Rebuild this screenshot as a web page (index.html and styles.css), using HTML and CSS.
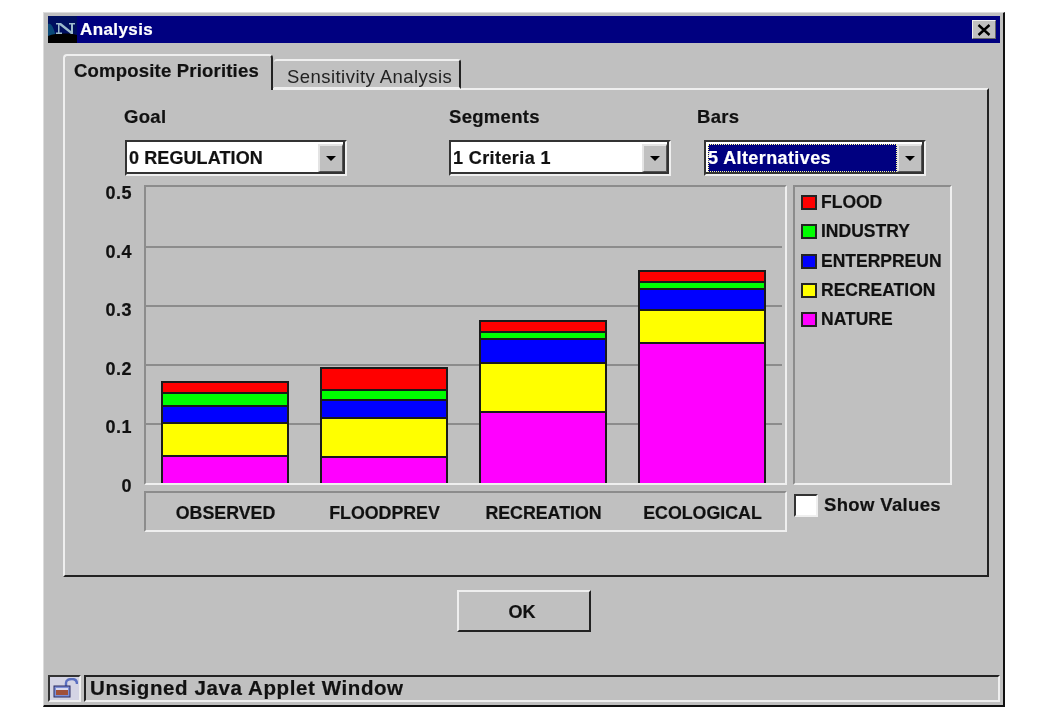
FILE: index.html
```html
<!DOCTYPE html>
<html lang="en">
<head>
<meta charset="utf-8">
<title>Analysis</title>
<link rel="stylesheet" href="styles.css">
</head>
<body>
<div class="window">
  <div class="titlebar">
    <svg class="logo" width="29" height="27" viewBox="0 0 29 27"><rect width="29" height="27" fill="#001060"/><path d="M0 8C4 6 6 14 8 20H0Z" fill="#0a4a78"/><path d="M0 20C8 17 20 17 29 19V27H0Z" fill="#000"/><path d="M8 7H13L23 15V8.500H21V7H27V8.500H25V18H23L11.500 9V16.500H14V18H8V16.500H10V8.500H8Z" fill="#9dbccc"/></svg>
    <span class="title">Analysis</span>
    <button class="close"><svg width="14" height="12" viewBox="0 0 14 12"><path d="M1.500 1L12.500 11M12.500 1L1.500 11" stroke="#000" stroke-width="2.400"/></svg></button>
  </div>
  <div class="content">
    <div class="tabs">
      <div class="tab tab-active">Composite Priorities</div>
      <div class="tab tab-other">Sensitivity Analysis</div>
    </div>
    <div class="panel">
      <div class="selectors">
        <div class="selector sel-goal">
          <div class="sel-label">Goal</div>
          <div class="combo combo-goal">
            <div class="combo-value">0 REGULATION</div>
            <div class="combo-btn"><span class="tri"></span></div>
          </div>
        </div>
        <div class="selector sel-seg">
          <div class="sel-label">Segments</div>
          <div class="combo combo-seg">
            <div class="combo-value">1 Criteria 1</div>
            <div class="combo-btn"><span class="tri"></span></div>
          </div>
        </div>
        <div class="selector sel-bars">
          <div class="sel-label">Bars</div>
          <div class="combo combo-bars">
            <div class="combo-value focused">5 Alternatives</div>
            <div class="combo-btn"><span class="tri"></span></div>
          </div>
        </div>
      </div>
      <div class="chart-row">
        <div class="yaxis">
          <span>0.5</span><span>0.4</span><span>0.3</span><span>0.2</span><span>0.1</span><span>0</span>
        </div>
        <div class="chart-main">
          <div class="plot">
            <div class="grid"><i></i><i></i><i></i><i></i></div>
            <div class="bars">
              <div class="bar">
                <div class="seg red" style="height:13px"></div>
                <div class="seg green" style="height:13px"></div>
                <div class="seg blue" style="height:17px"></div>
                <div class="seg yellow" style="height:33px"></div>
                <div class="seg magenta" style="height:26px"></div>
              </div>
              <div class="bar">
                <div class="seg red" style="height:24px"></div>
                <div class="seg green" style="height:10px"></div>
                <div class="seg blue" style="height:18px"></div>
                <div class="seg yellow" style="height:39px"></div>
                <div class="seg magenta" style="height:25px"></div>
              </div>
              <div class="bar">
                <div class="seg red" style="height:13px"></div>
                <div class="seg green" style="height:7px"></div>
                <div class="seg blue" style="height:24px"></div>
                <div class="seg yellow" style="height:49px"></div>
                <div class="seg magenta" style="height:70px"></div>
              </div>
              <div class="bar">
                <div class="seg red" style="height:13px"></div>
                <div class="seg green" style="height:7px"></div>
                <div class="seg blue" style="height:21px"></div>
                <div class="seg yellow" style="height:33px"></div>
                <div class="seg magenta" style="height:139px"></div>
              </div>
            </div>
          </div>
          <div class="categories">
            <span>OBSERVED</span><span>FLOODPREV</span><span>RECREATION</span><span>ECOLOGICAL</span>
          </div>
        </div>
        <div class="side">
          <div class="legend">
            <div class="legend-item"><span class="swatch red"></span>FLOOD</div>
            <div class="legend-item"><span class="swatch green"></span>INDUSTRY</div>
            <div class="legend-item"><span class="swatch blue"></span>ENTERPREUN</div>
            <div class="legend-item"><span class="swatch yellow"></span>RECREATION</div>
            <div class="legend-item"><span class="swatch magenta"></span>NATURE</div>
          </div>
          <div class="show-values"><span class="checkbox"></span><span class="show-label">Show Values</span></div>
        </div>
      </div>
    </div>
    <div class="actions"><button class="ok">OK</button></div>
  </div>
  <div class="statusbar">
    <div class="lock-box"><svg width="26" height="22" viewBox="0 0 26 22"><path d="M14 9V5C14 2 17 1 20 1S25 3 25 6" fill="none" stroke="#5a6fc0" stroke-width="2.400"/><rect x="2" y="8" width="16" height="11" fill="#7d8fd8" stroke="#2a2a60"/><rect x="4" y="12" width="12" height="5" fill="#a0503a"/><rect x="4" y="10" width="12" height="2" fill="#d8d8ee"/></svg></div>
    <div class="status-text">Unsigned Java Applet Window</div>
  </div>
</div>
</body>
</html>
```
FILE: styles.css
```css
* { box-sizing: border-box; }
html, body { margin: 0; padding: 0; background: #fff; }
body { width: 1040px; height: 720px; padding: 12px 0 0 43px; font-family: "Liberation Sans", Arial, sans-serif; font-weight: 700; color: #111; -webkit-text-stroke: 0.2px currentColor; }
.window { width: 962px; height: 695px; background: #c0c0c0; border: solid; border-width: 1px 2px 2px 1px; border-color: #dcdcdc #111 #111 #dcdcdc; padding: 3px 3px 3px 4px; display: flex; flex-direction: column; filter: blur(0.3px); }
.titlebar { height: 27px; flex: none; background: #000080; color: #fff; display: flex; align-items: center; }
.logo { flex: none; }
.title { margin-left: 3px; font-size: 17px; letter-spacing: 0.4px; }
.close { margin-left: auto; margin-right: 4px; width: 24px; height: 19px; padding: 0; background: #c0c0c0; border: solid 1px; border-color: #efefef #666 #666 #efefef; display: flex; align-items: center; justify-content: center; }
.content { flex: 1; padding: 12px 11px 0 15px; display: flex; flex-direction: column; }
.tabs { display: flex; align-items: flex-end; height: 34px; margin-bottom: -1px; position: relative; z-index: 1; }
.tab { background: #c0c0c0; border-top: 2px solid #efefef; border-right: 2px solid #222; }
.tab-active { width: 210px; height: 36px; border-left: 2px solid #efefef; border-radius: 4px 4px 0 0; padding: 4px 0 0 9px; font-size: 18.500px; letter-spacing: 0.2px; margin-bottom: -1px; }
.tab-other { width: 187px; height: 30px; margin-left: 1px; border-radius: 3px 3px 0 0; padding: 5px 0 0 13px; font-weight: 400; font-size: 18.500px; letter-spacing: 0.45px; color: #222; border-bottom: 2px solid #efefef; -webkit-text-stroke: 0; }
.panel { width: 926px; height: 489px; flex: none; border: 2px solid; border-color: #efefef #222 #222 #efefef; }
.selectors { display: flex; height: 95px; padding-top: 17px; }
.selector { flex: none; }
.sel-goal { width: 325px; margin-left: 59px; }
.sel-seg { width: 248px; }
.sel-label { font-size: 18.500px; line-height: 20px; letter-spacing: 0.3px; }
.combo { margin-top: 13px; width: 222px; height: 36px; display: flex; padding: 2px; background: #fff; border: 2px solid; border-color: #333 #efefef #efefef #333; box-shadow: inset -2px -2px 0 #333; align-items: stretch; font-size: 18px; line-height: 28px; }
.combo-goal { margin-left: 1px; }
.combo-bars { margin-left: 7px; }
.combo-value { flex: 1; letter-spacing: 0.1px; }
.combo-seg .combo-value, .combo-bars .combo-value { letter-spacing: 0.4px; }
.focused { background: #000080; color: #fff; outline: 1px dotted #ffff99; outline-offset: -1px; }
.combo-btn { width: 25px; background: #c0c0c0; border: solid; border-width: 2px 1px 1px 2px; border-color: #e4e4e4 #555 #555 #e4e4e4; display: flex; align-items: center; justify-content: center; flex: none; }
.tri { width: 0; height: 0; border-left: 5px solid transparent; border-right: 5px solid transparent; border-top: 5px solid #000; }
.chart-row { display: flex; height: 347px; }
.yaxis { flex: none; width: 67px; height: 308px; padding-top: 1px; display: flex; flex-direction: column; justify-content: space-between; align-items: flex-end; font-size: 18px; line-height: 14px; letter-spacing: 0.5px; }
.chart-main { flex: none; margin-left: 12px; width: 643px; }
.plot { position: relative; height: 300px; border: solid 2px; border-color: #8c8c8c #efefef #efefef #8c8c8c; }
.grid { position: absolute; top: 2px; left: 0; right: 3px; display: flex; flex-direction: column; }
.grid i { display: block; height: 59px; border-bottom: 2px solid #8c8c8c; }
.bars { position: absolute; left: 15px; bottom: 0; display: flex; align-items: flex-end; gap: 31px; }
.bar { width: 128px; border: solid 2px #1a1a1a; border-width: 0 2px; display: flex; flex-direction: column; }
.seg { border-bottom: 2px solid #1a1a1a; flex: none; }
.seg:first-child { border-top: 2px solid #1a1a1a; }
.seg:last-child { border-bottom: 0; }
.red { background: #ff0000; }
.green { background: #00ff00; }
.blue { background: #0000ff; }
.yellow { background: #ffff00; }
.magenta { background: #ff00ff; }
.categories { height: 41px; margin-top: 6px; display: flex; border: solid 2px; border-color: #8c8c8c #efefef #efefef #8c8c8c; font-size: 17.800px; padding: 10px 0 0 0; line-height: 20px; }
.categories span { width: 159px; text-align: center; }
.side { flex: none; margin-left: 6px; width: 160px; }
.legend { height: 300px; width: 159px; border: solid 2px; border-color: #8c8c8c #efefef #efefef #8c8c8c; padding: 1px 0 0 6px; }
.legend-item { height: 29.300px; display: flex; align-items: center; font-size: 17.500px; }
.swatch { width: 16px; height: 15px; margin-right: 4px; border: 2px solid #222; }
.show-values { display: flex; align-items: flex-start; margin-top: 9px; margin-left: 1px; }
.checkbox { width: 24px; height: 23px; background: #fff; border: solid 2px; border-color: #333 #efefef #efefef #333; }
.show-label { margin-left: 6px; margin-top: 1px; font-size: 18.500px; letter-spacing: 0.35px; line-height: 20px; }
.actions { display: flex; height: 55px; align-items: flex-end; padding-left: 394px; }
.ok { width: 134px; height: 42px; padding: 3px 4px 0 0; background: #c0c0c0; border: solid 2px; border-color: #efefef #222 #222 #efefef; font-family: inherit; font-weight: 700; font-size: 18px; color: #111; }
.statusbar { height: 27px; flex: none; display: flex; margin-top: auto; }
.lock-box { width: 33px; height: 27px; flex: none; display: flex; align-items: center; justify-content: center; background: #d4d4e4; border: solid 2px; border-color: #333 #efefef #efefef #333; }
.status-text { flex: 1; margin-left: 3px; border: solid 2px; border-color: #222 #efefef #efefef #222; padding-left: 4px; font-size: 20.500px; line-height: 22px; letter-spacing: 0.6px; color: #111; }
```
